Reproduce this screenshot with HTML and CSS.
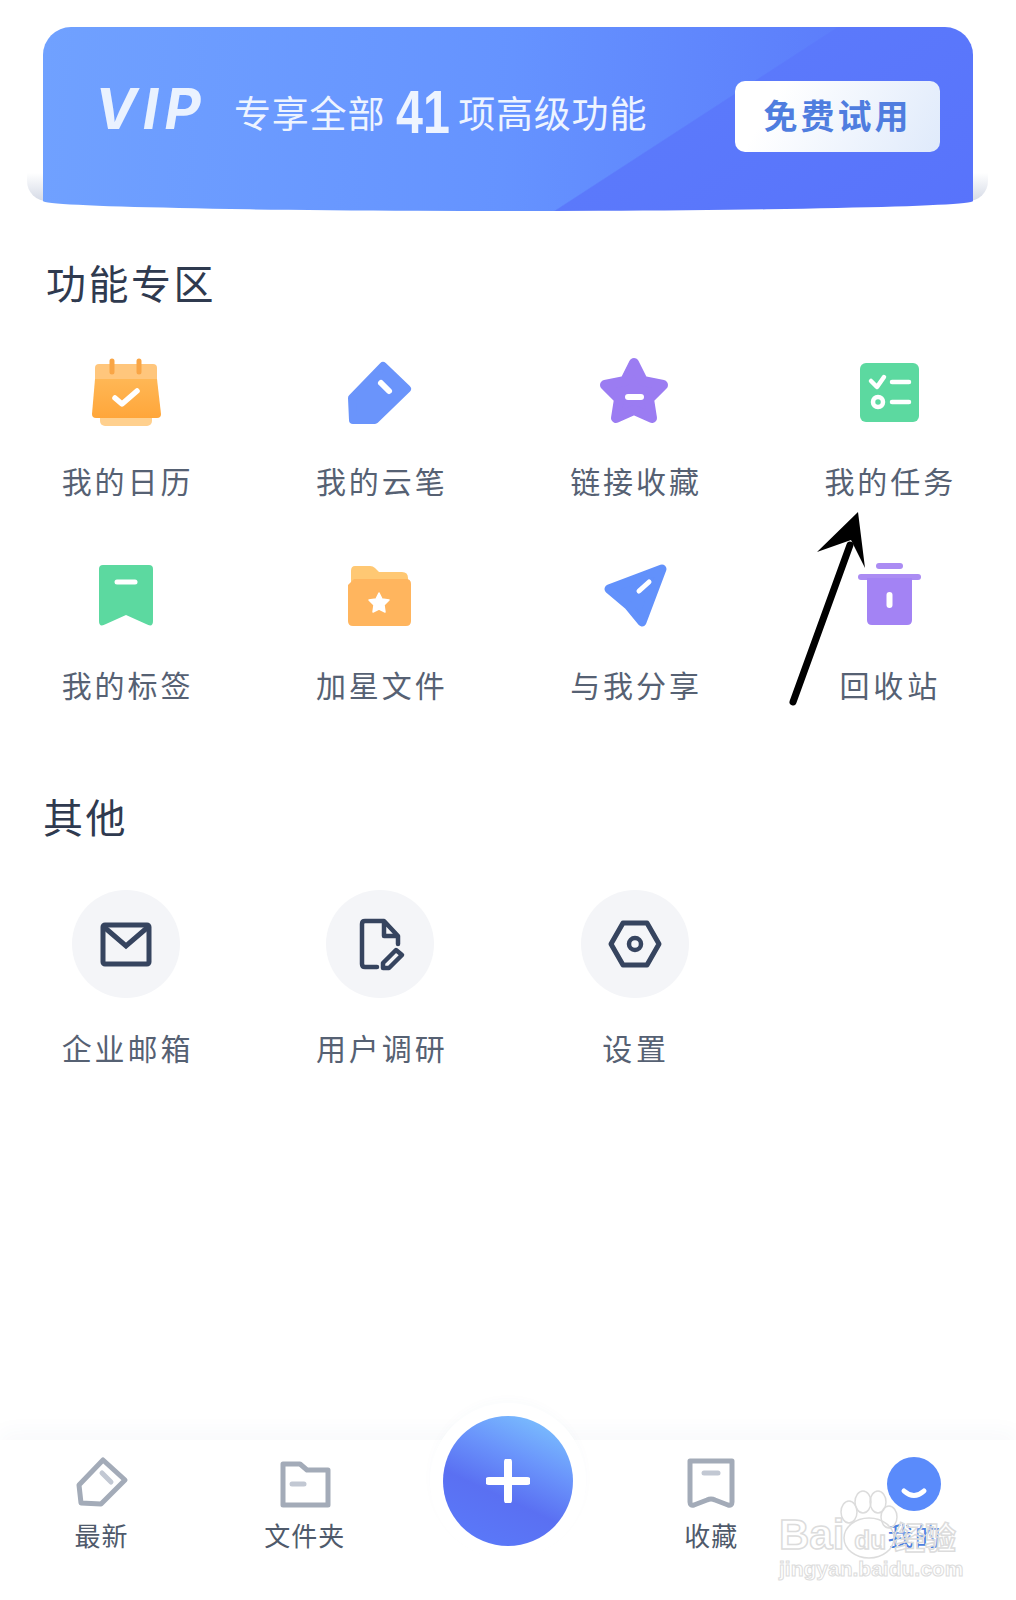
FILE: index.html
```html
<!DOCTYPE html>
<html lang="zh-CN">
<head>
	<meta charset="UTF-8">
	<title>我的</title>
	<link rel="stylesheet" href="styles.css">
</head>
<body>
<div class="page">
	<div class="vip">
		<div class="vip-card">
			<span class="vip-logo">VIP</span>
			<span class="vip-text">专享全部</span>
			<span class="vip-num">41</span>
			<span class="vip-text">项高级功能</span>
			<span class="vip-btn">免费试用</span>
		</div>
	</div>

	<h2 class="title">功能专区</h2>
	<div class="grid">
		<div class="item">
			<svg class="ico" viewBox="0 0 80 80">
				<defs>
					<linearGradient id="cal" x1="0" y1="0" x2="0" y2="1">
						<stop offset="0" stop-color="#ffb755"/>
						<stop offset="1" stop-color="#ffa63a"/>
					</linearGradient>
				</defs>
				<rect x="14" y="60" width="52" height="14" rx="5" fill="#ffd08e"/>
				<path d="M13 12H67Q71 12 71 16V27H9V16Q9 12 13 12Z" fill="#ffc67c"/>
				<path d="M9 27H71L75 62Q75 66 71 66H10Q6 66 6 62Z" fill="url(#cal)"/>
				<path d="M26 9V20M53 9V20" stroke="#f9a545" stroke-width="5" stroke-linecap="round"/>
				<path d="M29 46L36 52L51 39" fill="none" stroke="#fff" stroke-width="5.5" stroke-linecap="round" stroke-linejoin="round"/>
			</svg>
			<span class="name">我的日历</span>
		</div>
		<div class="item">
			<svg class="ico" viewBox="0 0 80 80">
				<path d="M12 46L43 14L67 37L35 68H13Z" fill="#6a94fb" stroke="#6a94fb" stroke-width="8" stroke-linejoin="round"/>
				<path d="M41 31L49 39" stroke="#fff" stroke-width="6" stroke-linecap="round"/>
			</svg>
			<span class="name">我的云笔</span>
		</div>
		<div class="item">
			<svg class="ico" viewBox="0 0 80 80">
				<path d="M39 11L48 29L68 33L54 47L57 66L39 58L21 66L24 47L10 33L30 29Z" fill="#9b7cf2" stroke="#9b7cf2" stroke-width="10" stroke-linejoin="round"/>
				<path d="M33 45H46" stroke="#fff" stroke-width="6" stroke-linecap="round"/>
			</svg>
			<span class="name">链接收藏</span>
		</div>
		<div class="item">
			<svg class="ico" viewBox="0 0 80 80">
				<rect x="11" y="11" width="59" height="59" rx="6" fill="#5cd9a0"/>
				<path d="M22 29L28 35L35 25M43 30H60M43 50H60" fill="none" stroke="#fff" stroke-width="4.5" stroke-linecap="round" stroke-linejoin="round"/>
				<circle cx="29" cy="50" r="5" fill="none" stroke="#fff" stroke-width="4.5"/>
			</svg>
			<span class="name">我的任务</span>
		</div>
		<div class="item">
			<svg class="ico" viewBox="0 0 80 80">
				<path d="M17 9H63Q67 9 67 13V65Q67 72 60 68L40 59L20 68Q13 72 13 65V13Q13 9 17 9Z" fill="#5cd9a0"/>
				<path d="M31 26H49" stroke="#fff" stroke-width="5" stroke-linecap="round"/>
			</svg>
			<span class="name">我的标签</span>
		</div>
		<div class="item">
			<svg class="ico" viewBox="0 0 80 80">
				<path d="M15 10H30Q33 10 35 12L39 16H62Q68 16 68 22V30H11V15Q11 10 15 10Z" fill="#ffc873"/>
				<path d="M14 23H66Q71 23 71 28V65Q71 70 66 70H13Q8 70 8 65V29Z" fill="#ffb55e"/>
				<path d="M39 37L42 43L49 44L44 49L45 56L39 53L33 56L34 49L29 44L36 43Z" fill="#fff" stroke="#fff" stroke-width="1.5" stroke-linejoin="round"/>
			</svg>
			<span class="name">加星文件</span>
		</div>
		<div class="item">
			<svg class="ico" viewBox="0 0 80 80">
				<path d="M67 13L14 33L33 49L47 66Z" fill="#6291fb" stroke="#6291fb" stroke-width="9" stroke-linejoin="round"/>
				<path d="M44 35L54 26" stroke="#fff" stroke-width="5" stroke-linecap="round"/>
			</svg>
			<span class="name">与我分享</span>
		</div>
		<div class="item">
			<svg class="ico" viewBox="0 0 80 80">
				<rect x="27" y="7" width="27" height="6" rx="3" fill="#ab8cf3"/>
				<rect x="9" y="18" width="63" height="6" rx="3" fill="#ab8cf3"/>
				<path d="M18 22H63V64Q63 69 58 69H23Q18 69 18 64Z" fill="#a383f4"/>
				<path d="M40.500 39V49" stroke="#fff" stroke-width="6" stroke-linecap="round"/>
			</svg>
			<span class="name name-wide">回收站</span>
		</div>
	</div>

	<h2 class="title title-other">其他</h2>
	<div class="grid">
		<div class="item item-other">
			<span class="circle">
				<svg class="ico-line" viewBox="0 0 108 108">
					<rect x="31" y="35" width="46" height="39" rx="2" fill="none" stroke="#36445f" stroke-width="5"/>
					<path d="M32 37L54 56L76 37" fill="none" stroke="#36445f" stroke-width="5"/>
				</svg>
			</span>
			<span class="name">企业邮箱</span>
		</div>
		<div class="item item-other">
			<span class="circle">
				<svg class="ico-line" viewBox="0 0 108 108">
					<path d="M51 77H39Q36 77 36 74V34Q36 31 39 31H58L72 46V54M58 32V46H71" fill="none" stroke="#36445f" stroke-width="4.500" stroke-linecap="round" stroke-linejoin="round"/>
					<path d="M57 73L70 60L76 65L63 78L57 78Z" fill="none" stroke="#36445f" stroke-width="4.500" stroke-linejoin="round"/>
				</svg>
			</span>
			<span class="name">用户调研</span>
		</div>
		<div class="item item-other">
			<span class="circle">
				<svg class="ico-line" viewBox="0 0 108 108">
					<path d="M42 33H66L78 54L66 75H42L30 54Z" fill="none" stroke="#36445f" stroke-width="5" stroke-linejoin="round"/>
					<circle cx="54" cy="54" r="6" fill="none" stroke="#36445f" stroke-width="4.500"/>
				</svg>
			</span>
			<span class="name name-wide">设置</span>
		</div>
	</div>

	<div class="tabbar">
		<div class="tab">
			<svg class="tab-ico" viewBox="0 0 60 60">
				<path d="M31 7L53 27L29 51L9 50L7 32Z" fill="none" stroke="#a3abb8" stroke-width="5" stroke-linejoin="round"/>
				<path d="M30 20L39 29" stroke="#c2c8d3" stroke-width="5" stroke-linecap="round"/>
			</svg>
			<span class="tab-name">最新</span>
		</div>
		<div class="tab">
			<svg class="tab-ico" viewBox="0 0 60 60">
				<path d="M8 11H25L32 17H53V52H8Z" fill="none" stroke="#a3abb8" stroke-width="5" stroke-linejoin="round"/>
				<path d="M17 31H29" stroke="#c2c8d3" stroke-width="5" stroke-linecap="round"/>
			</svg>
			<span class="tab-name">文件夹</span>
		</div>
		<div class="tab tab-add">
			<span class="fab">
				<svg class="fab-plus" viewBox="0 0 44 44">
					<path d="M22 3V41M3 22H41" stroke="#fff" stroke-width="8" stroke-linecap="round"/>
				</svg>
			</span>
		</div>
		<div class="tab">
			<svg class="tab-ico" viewBox="0 0 60 60">
				<path d="M9 8H51V49Q51 53 47 52L34 47Q30 45 26 47L13 52Q9 53 9 49Z" fill="none" stroke="#a3abb8" stroke-width="5" stroke-linejoin="round"/>
				<path d="M23 20H37" stroke="#c2c8d3" stroke-width="5" stroke-linecap="round"/>
			</svg>
			<span class="tab-name">收藏</span>
		</div>
		<div class="tab">
			<svg class="tab-ico" viewBox="0 0 60 60">
				<circle cx="30" cy="31" r="27" fill="#5a8bfb"/>
				<path d="M20 38Q30 47 40 38" fill="none" stroke="#fff" stroke-width="5" stroke-linecap="round"/>
			</svg>
			<span class="tab-name tab-on">我的</span>
		</div>
	</div>

	<!-- arrow drawn on the screenshot -->
	<svg class="arrow" viewBox="0 0 90 200">
		<path d="M13 192L70 35" stroke="#000" stroke-width="7" stroke-linecap="round"/>
		<path d="M78 2L37 42L71 30L85 58Z" fill="#000"/>
	</svg>

	<div class="mark">
		<svg class="mark-paw" viewBox="0 0 110 70">
			<g fill="none" stroke="#dcdcdc" stroke-width="1.500">
				<ellipse cx="18" cy="22" rx="8" ry="11"/>
				<ellipse cx="32" cy="12" rx="8" ry="11"/>
				<ellipse cx="47" cy="12" rx="8" ry="11"/>
				<ellipse cx="58" cy="27" rx="8" ry="11"/>
				<ellipse cx="38" cy="48" rx="25" ry="20"/>
			</g>
		</svg>
		<div class="mark-top"><span class="mark-bai">Bai</span><span class="mark-du">du</span><span class="mark-cn">经验</span></div>
		<div class="mark-url">jingyan.baidu.com</div>
	</div>
</div>
</body>
</html>
```

FILE: styles.css
```css
*{
  padding: 0;
  margin: 0;
  box-sizing: border-box;
}

body{
  background: #fff;
  font-family: "Liberation Sans", "Noto Sans CJK SC", sans-serif;
}

.page{
  width: 1016px;
  height: 1600px;
  position: relative;
  display: flex;
  flex-direction: column;
  overflow: hidden;
}

/* vip banner */
.vip{
  position: relative;
  margin: 27px 43px 0;
}

.vip::before{
  content: "";
  position: absolute;
  left: -16px;
  right: -15px;
  top: 146px;
  height: 28px;
  border-radius: 0 0 20px 20px;
  background: linear-gradient(#fff, #d5dae6);
}

.vip-card{
  position: relative;
  height: 184px;
  padding: 54px 33px 0 52px;
  display: flex;
  align-items: flex-start;
  border-radius: 28px 28px 465px 465px / 28px 28px 10px 10px;
  background:
    linear-gradient(147deg, rgba(91, 121, 251, 0) 65.4%, #5b79fb 65.6%, #5873fb 100%),
    linear-gradient(95deg, #70a1ff, #6593ff 50%, #5c7dfb 85%);
  color: #eef4ff;
}

.vip-logo{
  width: 110px;
  margin-right: 29px;
  font: italic 700 56px/56px Inter, sans-serif;
  letter-spacing: 6px;
  color: #eaf2ff;
}

.vip-text{
  font: 37px/62px "Noto Sans CJK SC", sans-serif;
  letter-spacing: .8px;
}

.vip-num{
  width: 73px;
  padding-left: 11px;
  font: 700 62px/62px "Liberation Sans", sans-serif;
  transform: scaleX(.78);
  transform-origin: 11px 0;
}

.vip-btn{
  width: 205px;
  height: 71px;
  margin-left: auto;
  border-radius: 10px;
  background: linear-gradient(120deg, #fff 20%, #dfeafb);
  color: #4f7ddf;
  font: 700 34px/67px "Noto Sans CJK SC", sans-serif;
  letter-spacing: 3px;
  text-align: center;
}

/* sections */
.title{
  margin: 46px 0 45px 46px;
  font: 400 40px/50px "Noto Sans CJK SC", sans-serif;
  letter-spacing: 2.5px;
  color: #2f3a4f;
}

.title-other{
  margin: 87px 0 49px 43px;
}

.grid{
  display: grid;
  grid-template-columns: repeat(4, 1fr);
  row-gap: 56px;
  margin-left: -1px;
}

.item{
  display: flex;
  flex-direction: column;
  align-items: center;
  gap: 28px;
}

.item-other{
  gap: 29px;
}

.ico{
  width: 80px;
  height: 80px;
}

.name{
  margin-left: 3px;
  font: 30px/40px "Noto Sans CJK SC", sans-serif;
  letter-spacing: 3px;
  color: #566173;
}

.name-wide{
  letter-spacing: 4px;
}

.circle{
  width: 108px;
  height: 108px;
  border-radius: 50%;
  background: #f4f5f8;
}

.ico-line{
  display: block;
  width: 108px;
  height: 108px;
}

/* bottom bar */
.tabbar{
  position: absolute;
  left: 0;
  right: 0;
  bottom: 0;
  height: 160px;
  padding-top: 13px;
  display: grid;
  grid-template-columns: repeat(5, 1fr);
  background: #fff;
  box-shadow: 0 -8px 20px rgba(70, 90, 140, .035);
}

.tab{
  display: flex;
  flex-direction: column;
  align-items: center;
  gap: 4px;
}

.tab-ico{
  width: 60px;
  height: 60px;
}

.tab-name{
  font: 26px/36px "Noto Sans CJK SC", sans-serif;
  letter-spacing: 1px;
  color: #4f5a6b;
}

.tab-on{
  color: #4d7fe0;
}

.tab-add{
  position: relative;
}

.fab{
  position: absolute;
  left: 37px;
  top: -37px;
  width: 130px;
  height: 130px;
  display: flex;
  align-items: center;
  justify-content: center;
  border-radius: 50%;
  background: linear-gradient(205deg, #7fcbff 0%, #6a94fb 35%, #5a70f2 60%, #5a7bfb 100%);
  box-shadow: 0 0 0 13px #fff, 0 -4px 10px 13px rgba(70, 90, 140, .02);
}

.fab-plus{
  width: 44px;
  height: 44px;
}

/* arrow and watermark sit over the page */
.arrow{
  position: absolute;
  left: 780px;
  top: 510px;
  width: 90px;
  height: 200px;
}

.mark{
  position: absolute;
  left: 779px;
  top: 1515px;
  width: 200px;
}

.mark-paw{
  position: absolute;
  left: 52px;
  top: -25px;
  width: 110px;
  height: 70px;
}

.mark-top{
  position: relative;
  display: flex;
  align-items: baseline;
  height: 40px;
  font: 700 42px/40px "Liberation Sans", sans-serif;
  color: rgba(255, 255, 255, .5);
  -webkit-text-stroke: 1.5px #dcdcdc;
}

.mark-du{
  margin-left: 10px;
  font-size: 26px;
}

.mark-cn{
  margin-left: 8px;
  font: 700 31px/40px "Noto Sans CJK SC", sans-serif;
  color: rgba(255, 255, 255, .25);
}

.mark-url{
  position: relative;
  margin-top: 1px;
  font: 700 21px/26px "Liberation Sans", sans-serif;
  color: rgba(255, 255, 255, .6);
  -webkit-text-stroke: 1px #dcdcdc;
}
```
